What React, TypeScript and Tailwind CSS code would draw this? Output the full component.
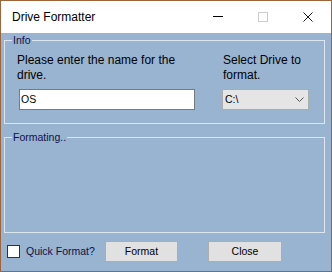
import React from "react";

export default function App() {
  const font = { fontFamily: '"Liberation Sans", Arial, sans-serif' };
  return (
    <div
      className="w-[332px] h-[272px] border border-[#a0643a] flex flex-col bg-[#99b4d1] text-[12px] text-black"
      style={font}
    >
      {/* Title bar */}
      <div className="h-[32px] bg-white flex items-center shrink-0">
        <div className="pl-[11px] flex-1 leading-[16px] text-[12px] text-black">Drive Formatter</div>
        <div className="flex h-full mr-[1px]">
          <div className="w-[45px] h-full flex items-center justify-center">
            <svg width="10" height="10" viewBox="0 0 10 10">
              <rect x="0" y="4" width="10" height="1" fill="#000" />
            </svg>
          </div>
          <div className="w-[45px] h-full flex items-center justify-center">
            <svg width="10" height="10" viewBox="0 0 10 10">
              <rect x="0.5" y="0.5" width="9" height="9" fill="none" stroke="#cccccc" strokeWidth="1" />
            </svg>
          </div>
          <div className="w-[45px] h-full flex items-center justify-center">
            <svg width="10" height="10" viewBox="0 0 10 10">
              <path d="M0.5 0.5 L9.5 9.5 M9.5 0.5 L0.5 9.5" stroke="#000" strokeWidth="0.9" fill="none" />
            </svg>
          </div>
        </div>
      </div>

      {/* Body */}
      <div className="flex-1 flex flex-col pl-[3px]">
        <fieldset className="w-[321px] h-[91px] border border-[#dde5ee] m-0 p-0 pl-[7px]">
          <legend className="px-[1px] leading-[14px] text-[10.5px] text-[#10104a]">Info</legend>
          <div className="flex pl-[5px] pt-[6px]">
            <div className="w-[205px] flex flex-col">
              <div className="leading-[15px]">
                Please enter the name for the
                <br />
                drive.
              </div>
              <div className="mt-[6px] ml-[2px] w-[176px] h-[21px] border border-[#7a7a7a] bg-white pl-[1px] flex items-center leading-[15px] text-[10.5px]">
                OS
              </div>
            </div>
            <div className="flex flex-col">
              <div className="leading-[15px] pl-[1px]">
                Select Drive to
                <br />
                format.
              </div>
              <div className="mt-[6px] w-[87px] h-[21px] border border-[#acacac] bg-[#e5e5e5] pl-[2px] pr-[4px] flex items-center justify-between leading-[15px] text-[10.5px]">
                <span>C:\</span>
                <svg width="9" height="5" viewBox="0 0 9 5">
                  <path d="M0.5 0.5 L4.5 4.5 L8.5 0.5" stroke="#555" strokeWidth="1" fill="none" />
                </svg>
              </div>
            </div>
          </div>
        </fieldset>

        <fieldset className="mt-[6px] w-[321px] h-[103px] border border-[#dde5ee] m-0 p-0 pl-[7px]">
          <legend className="px-[1px] leading-[14px] text-[10.5px] text-[#10104a]">Formating..</legend>
        </fieldset>

        <div className="flex items-center mt-[8px] h-[21px] text-[10.5px]">
          <div className="ml-[3px] w-[13px] h-[13px] border border-[#333333] bg-white shrink-0" />
          <span className="ml-[6px] w-[79px] leading-[15px] text-[#10104a] whitespace-nowrap">Quick Format?</span>
          <div className="w-[73px] h-[21px] border border-[#adadad] bg-[#e1e1e1] flex items-center justify-center leading-[15px]">
            Format
          </div>
          <div className="ml-[30px] w-[74px] h-[21px] border border-[#adadad] bg-[#e1e1e1] flex items-center justify-center leading-[15px]">
            Close
          </div>
        </div>
      </div>
    </div>
  );
}
